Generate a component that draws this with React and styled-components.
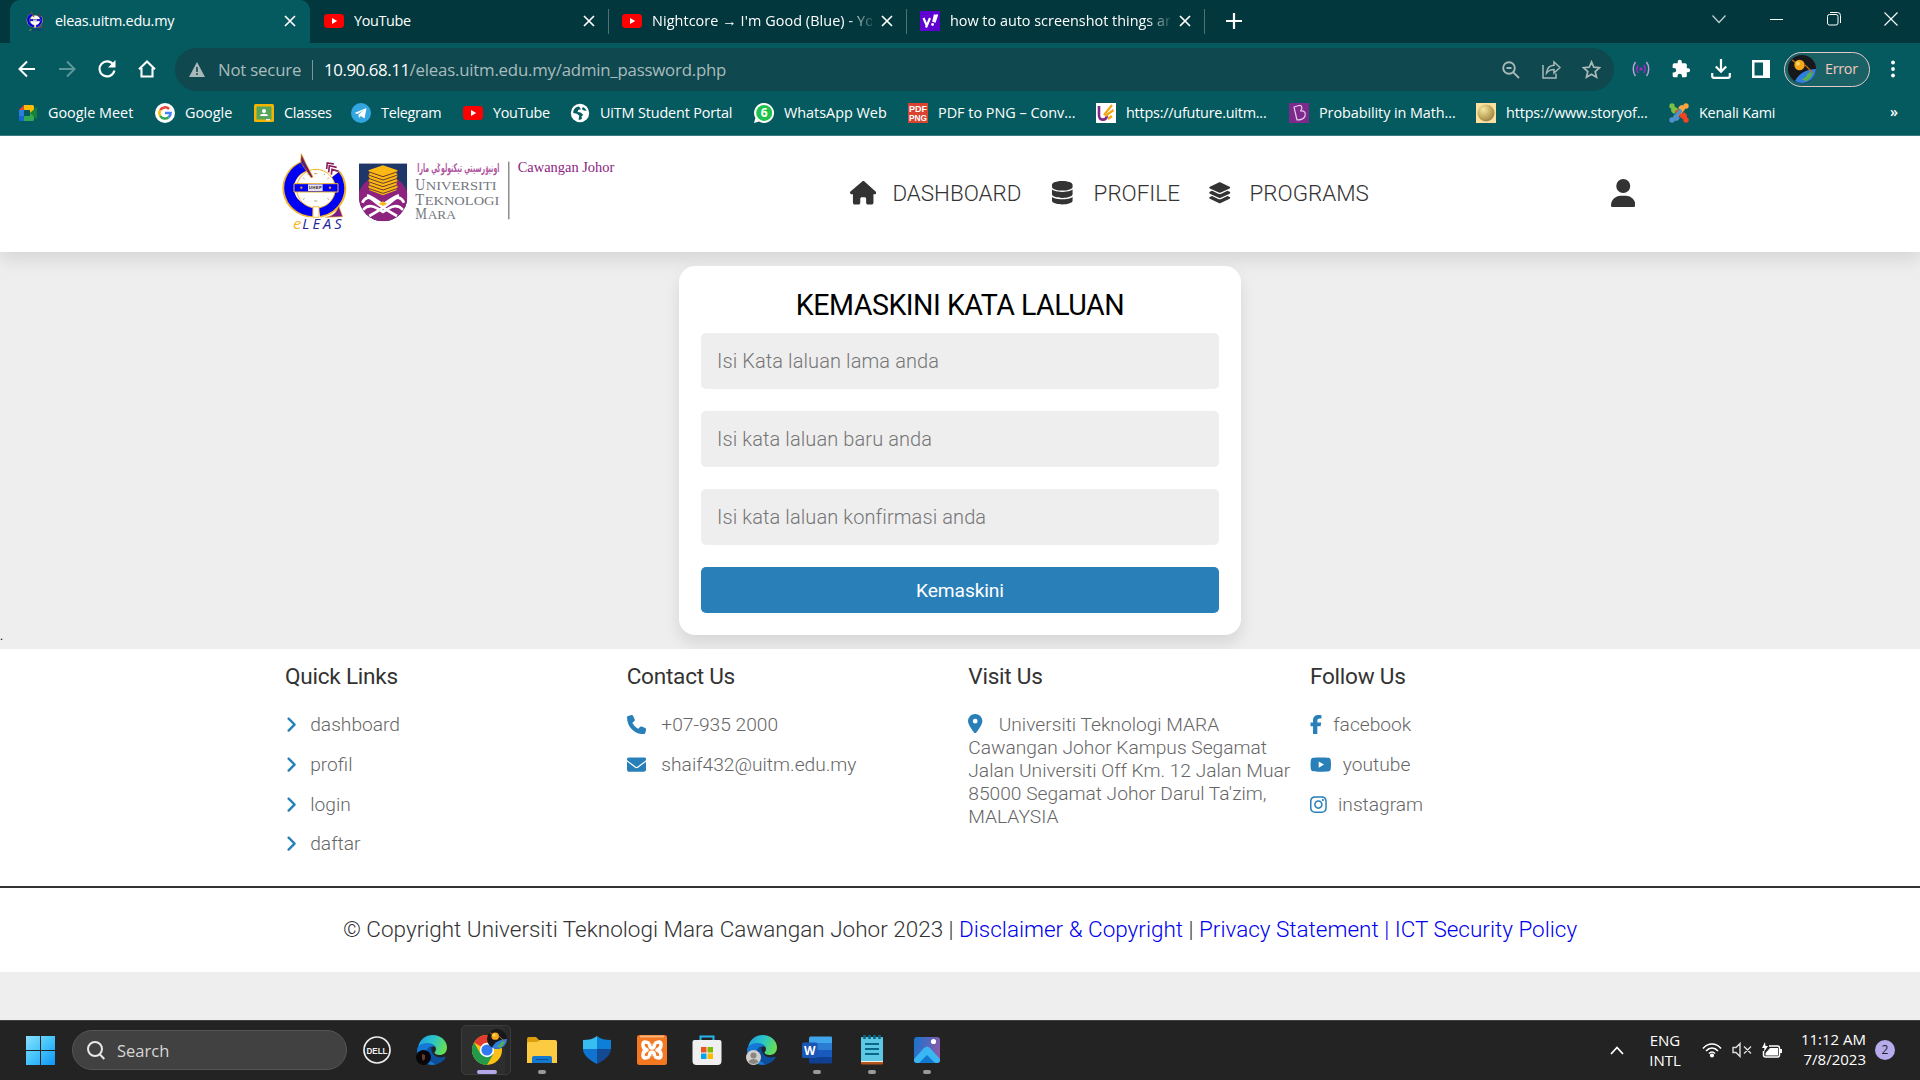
import React from "react";
import styled, { createGlobalStyle } from "styled-components";
import {
  FaHouse,
  FaDatabase,
  FaLayerGroup,
  FaUser,
  FaAngleRight,
  FaPhone,
  FaEnvelope,
  FaLocationDot,
  FaFacebookF,
  FaYoutube,
  FaInstagram,
} from "react-icons/fa6";

const ui = `"Segoe UI", "Open Sans", "Noto Sans", sans-serif`;

const Global = createGlobalStyle`
  *, *::before, *::after { box-sizing: border-box; }
  body { margin: 0; background: #eee; font-family: Roboto, sans-serif; overflow: hidden; }
  svg { display: block; flex: none; }
  a { text-decoration: none; color: inherit; }
  h2, h3, p { margin: 0; font-weight: 400; }
`;

const Screen = styled.div`
  width: 1920px;
  height: 1080px;
  display: flex;
  flex-direction: column;
  overflow: hidden;
`;

/* ---------- browser ---------- */

const TabStrip = styled.div`
  display: flex;
  height: 43px;
  padding-left: 10px;
  background: #02383d;
  font-family: ${ui};
  color: #fff;
`;

const Tab = styled.div`
  display: flex;
  align-items: center;
  width: ${(p) => p.$w}px;
  height: 43px;
  padding: 0 ${(p) => (p.$active ? 14 : 13)}px 1px ${(p) => (p.$active ? 15 : 14)}px;
  gap: 9px;
  border-radius: 10px 10px 0 0;
  background: ${(p) => (p.$active ? "#055a5f" : "transparent")};
`;

const TabTitle = styled.span`
  flex: 1;
  min-width: 0;
  margin-left: 1px;
  padding-bottom: 1px;
  white-space: nowrap;
  font-size: 14.4px;
  line-height: 20px;
  letter-spacing: ${(p) => p.$ls || 0}px;
  ${(p) =>
    p.$fade &&
    `mask-image: linear-gradient(to right, #000 89%, transparent 102%);`}
`;

const TabRule = styled.div`
  width: 1px;
  height: 25px;
  margin: 9px -1px 0 0;
  background: #4d7377;
`;

const NewTab = styled.div`
  display: flex;
  align-items: center;
  margin-left: 22px;
  padding-bottom: 1px;
`;

const WindowButtons = styled.div`
  display: flex;
  align-items: center;
  height: 37px;
  margin-left: auto;
`;

const WindowButton = styled.div`
  display: flex;
  justify-content: center;
  width: 57.3px;
`;

const Toolbar = styled.div`
  display: flex;
  align-items: center;
  height: 52px;
  padding-left: 7px;
  background: #055a5f;
  font-family: ${ui};
`;

const IconBox = styled.div`
  display: flex;
  align-items: center;
  justify-content: center;
  width: ${(p) => p.$w || 40}px;
`;

const Address = styled.div`
  display: flex;
  align-items: center;
  width: 1439px;
  height: 43px;
  margin: 1px 7px 0 8px;
  padding: 0 3px 0 14px;
  border-radius: 22px;
  background: #0f484e;
  color: #a9bcbe;
  font-size: 16.8px;
  white-space: nowrap;
`;

const Secure = styled.span`
  margin-left: 13px;
  width: 84px;
  padding-bottom: 1px;
  letter-spacing: -0.2px;
`;

const AddressRule = styled.span`
  width: 1px;
  height: 20px;
  margin: 0 11px 0 10px;
  background: #7d9799;
`;

const Url = styled.span`
  flex: 1;
  padding-bottom: 1px;
  letter-spacing: -0.2px;
`;

const Host = styled.span`
  color: #fff;
  letter-spacing: -0.4px;
`;

const Profile = styled.div`
  display: flex;
  align-items: center;
  gap: 9px;
  width: 86px;
  height: 35px;
  margin-left: 3px;
  padding-left: 3px;
  border: 1.5px solid #e3c9c8;
  border-radius: 18px;
  background: #1a6165;
  color: #f5c8c0;
  font-size: 14.4px;
  letter-spacing: -0.3px;
`;

const ProfileName = styled.span`
  padding-bottom: 1px;
`;

const Bookmarks = styled.div`
  display: flex;
  align-items: center;
  height: 41px;
  padding: 0 0 4px 18px;
  border-bottom: 1px solid #3b7d84;
  background: #055a5f;
  color: #fff;
  font-family: ${ui};
  font-size: 14.4px;
`;

const Bookmark = styled.div`
  display: flex;
  align-items: center;
  gap: 10px;
  width: ${(p) => p.$w}px;
  white-space: nowrap;
  letter-spacing: ${(p) => p.$ls || 0}px;
`;

const BookmarkLabel = styled.span`
  padding-bottom: 1px;
`;

const More = styled.span`
  margin-left: auto;
  padding: 0 22px 4px 0;
  font-weight: 600;
`;

const Close = () => (
  <svg width="12" height="12" viewBox="0 0 12 12" stroke="#fff" strokeWidth="1.7">
    <path d="M1 1l10 10M11 1L1 11" />
  </svg>
);

const YouTubeMark = () => (
  <svg width="20" height="20" viewBox="0 0 20 20">
    <rect y="3" width="20" height="14" rx="3.4" fill="#f00" />
    <path d="M8 7l5.2 3L8 13z" fill="#fff" />
  </svg>
);

const Orbit = ({ size }) => (
  <svg width={size} height={size} viewBox="0 0 28 28">
    <circle cx="14" cy="14" r="14" fill="#17181c" />
    <path d="M7 26a14 14 0 0 0 21-12c-9 0-17 4-21 12z" fill="#2f7fe0" />
    <path d="M14 25c2-3 4-2 5-5s3-2 6-3l-2 5-4 4z" fill="#58b04b" />
    <path d="M17 10l8 8M4 5l7 5" stroke="#c4701a" strokeWidth="1.2" />
    <circle cx="11.5" cy="10" r="5.2" fill="#f5a81c" />
    <circle cx="10" cy="8.5" r="2" fill="#ffd657" />
  </svg>
);

const bookmarks = [
  {
    label: "Google Meet", w: 137,
    icon: (
      <svg width="20" height="20" viewBox="0 0 20 20">
        <path d="M1 7l5-5v5z" fill="#e94335" />
        <path d="M6 2h8.500a1.500 1.500 0 0 1 1.500 1.500V9l-4 2V7H6z" fill="#fbbc04" />
        <path d="M1 7h5v6H1z" fill="#2a7de1" />
        <path d="M1 13h5v5H2.500A1.500 1.500 0 0 1 1 16.500z" fill="#1967d2" />
        <path d="M6 13h6V9.500l4 2v5a1.500 1.500 0 0 1-1.500 1.500H6z" fill="#34a853" />
        <path d="M12 10l6-5.500c.5-.4 1-.2 1 .5v10c0 .7-.5.9-1 .5z" fill="#188038" />
      </svg>
    ),
  },
  {
    label: "Google", w: 99,
    icon: (
      <svg width="20" height="20" viewBox="0 0 20 20">
        <circle cx="10" cy="10" r="10" fill="#fff" />
        <g fill="none" strokeWidth="2.5">
          <path d="M14 6A5.600 5.600 0 0 0 5.200 7.200" stroke="#ea4335" />
          <path d="M5.200 7.200a5.600 5.600 0 0 0 0 5.600" stroke="#fbbc05" />
          <path d="M5.200 12.800a5.600 5.600 0 0 0 8.400 1.500" stroke="#34a853" />
          <path d="M13.600 14.300a5.600 5.600 0 0 0 2-4.300H10" stroke="#4285f4" />
        </g>
      </svg>
    ),
  },
  {
    label: "Classes", w: 97, ls: -0.25,
    icon: (
      <svg width="20" height="20" viewBox="0 0 20 20">
        <rect y="1" width="20" height="18" rx="1.5" fill="#f4b400" />
        <rect x="2.5" y="3.5" width="15" height="13" fill="#57a55b" />
        <circle cx="10" cy="8" r="2" fill="#fff" />
        <path d="M6 13c0-3 8-3 8 0z" fill="#fff" />
        <path d="M12 16h4v1.500h-4z" fill="#eee" />
      </svg>
    ),
  },
  {
    label: "Telegram", w: 112, ls: -0.3,
    icon: (
      <svg width="20" height="20" viewBox="0 0 20 20">
        <circle cx="10" cy="10" r="10" fill="#34a6df" />
        <path d="M3.500 10L15.500 5l-2 10.500-3.600-2.600-2 2-.4-3.400 5-4.200-6.200 3.600z" fill="#fff" />
      </svg>
    ),
  },
  { label: "YouTube", w: 107, ls: -0.35, icon: <YouTubeMark /> },
  {
    label: "UiTM Student Portal", w: 184, ls: -0.15,
    icon: (
      <svg width="20" height="20" viewBox="0 0 20 20">
        <circle cx="10" cy="10" r="9.2" fill="#fff" />
        <path d="M9 3.500C5 4 3 7 3.300 10l3.500.8 2.500 2-.8 3.600c1.500.5 3 .2 3.500-.6l-.6-2.200 1.800-1.800-2.600-2.400-3.100-.3 1-2.300 2.500-.5zM13 4l-1.200 2 2 1.500 2.700.2C15.800 6 14.500 4.700 13 4z" fill="#075b60" />
      </svg>
    ),
  },
  {
    label: "WhatsApp Web", w: 154,
    icon: (
      <svg width="20" height="20" viewBox="0 0 20 20">
        <path d="M0 20l1.400-5A10 10 0 1 1 5 18.600z" fill="#fff" />
        <circle cx="10.2" cy="9.9" r="8" fill="#1fc24a" />
        <text x="10.2" y="14" textAnchor="middle" fontSize="12" fontWeight="700" fill="#fff" fontFamily="Open Sans, sans-serif">6</text>
      </svg>
    ),
  },
  {
    label: "PDF to PNG – Conv...", w: 188,
    icon: (
      <svg width="20" height="20" viewBox="0 0 20 20">
        <rect width="20" height="20" fill="#d8442f" />
        <g fill="#fff" fontSize="9" fontWeight="700" fontFamily="Liberation Sans, sans-serif">
          <text x="1" y="9" textLength="18">PDF</text>
          <text x="1" y="18" textLength="18" lengthAdjust="spacingAndGlyphs">PNG</text>
        </g>
      </svg>
    ),
  },
  {
    label: "https://ufuture.uitm...", w: 193, ls: -0.22,
    icon: (
      <svg width="20" height="20" viewBox="0 0 20 20">
        <rect width="20" height="20" fill="#fff" />
        <path d="M3 3v9c0 6 7 6 8 1" fill="none" stroke="#7c2a85" strokeWidth="2.6" />
        <path d="M8 12l8-10M9.500 13l8-6M12 16l4-3" fill="none" stroke="#f0a818" strokeWidth="2.2" />
      </svg>
    ),
  },
  {
    label: "Probability in Math...", w: 187, ls: -0.07,
    icon: (
      <svg width="20" height="20" viewBox="0 0 20 20">
        <rect width="20" height="20" fill="#7d2a8c" />
        <path d="M5 4l5-1.500c3-.5 4 3 1.500 5.500 4-.5 5.500 2 4.500 5-1 3-4 4-8 4L5 4z" fill="none" stroke="#e6cdea" strokeWidth="1.2" strokeLinejoin="round" />
      </svg>
    ),
  },
  {
    label: "https://www.storyof...", w: 193, ls: -0.15,
    icon: (
      <svg width="20" height="20" viewBox="0 0 20 20">
        <defs>
          <radialGradient id="pearl" cx=".35" cy=".3" r=".8">
            <stop offset="0" stopColor="#f5e6a5" />
            <stop offset=".6" stopColor="#bfa75a" />
            <stop offset="1" stopColor="#8b7a48" />
          </radialGradient>
        </defs>
        <rect width="20" height="20" fill="#ffdf9e" />
        <circle cx="10" cy="10" r="8.5" fill="url(#pearl)" />
      </svg>
    ),
  },
  {
    label: "Kenali Kami", w: 110, ls: -0.2,
    icon: (
      <svg width="20" height="20" viewBox="0 0 20 20" fill="none" strokeWidth="3.2" strokeLinecap="round">
        <path d="M12 11.500L7 6.500Q5 4.500 4 6t1 3" stroke="#7ac143" />
        <path d="M8.500 12l5-5q2-2 .5-3t-3 1" stroke="#f9a541" />
        <path d="M8 8.500l5 5q2 2 3 .5t-1-3" stroke="#f44321" />
        <path d="M11.500 8l-5 5q-2 2-.5 3t3-1" stroke="#5091cd" />
        <g stroke="none">
          <circle cx="3" cy="3" r="2.7" fill="#7ac143" />
          <circle cx="17" cy="3" r="2.7" fill="#f9a541" />
          <circle cx="17" cy="17" r="2.7" fill="#f44321" />
          <circle cx="3" cy="17" r="2.7" fill="#5091cd" />
        </g>
      </svg>
    ),
  },
];

/* ---------- site header ---------- */

const Header = styled.header`
  display: flex;
  align-items: center;
  height: 116px;
  flex: none;
  padding: 0 285px 2px;
  background: #fff;
  box-shadow: 0 8px 16px rgba(0, 0, 0, 0.1);
`;

const Brand = styled.div`
  display: flex;
  align-items: flex-start;
  gap: 12px;
  width: 565px;
  margin-top: -3px;
`;

const Crest = styled.div`
  margin-top: 10px;
`;

const Nav = styled.nav`
  display: flex;
  align-items: center;
  color: #333;
`;

const NavLink = styled.a`
  display: flex;
  align-items: center;
  gap: ${(p) => p.$gap}px;
  width: ${(p) => p.$w}px;
  font-size: 22.4px;
  font-weight: 300;
  line-height: 28px;
  white-space: nowrap;
  svg {
    width: ${(p) => p.$icon}px;
    height: 23.5px;
  }
`;

const Account = styled.div`
  margin-left: auto;
  color: #333;
  svg {
    width: 24.5px;
    height: 28px;
  }
`;

const ELeasLogo = ({ w, h }) => (
  <svg width={w} height={h} viewBox="45 39 183 237" overflow="visible">
    <g fill="none" strokeLinecap="butt">
      <path d="M104 82A74 70 0 0 0 128 218M148 218A74 70 0 0 0 196 106" stroke="#f0b52a" strokeWidth="35" />
      <path d="M104 82A74 70 0 0 0 128 217M148 217A74 70 0 0 0 195 108" stroke="#0000f5" strokeWidth="29" />
    </g>
    <circle cx="138" cy="149" r="58" fill="#fff" stroke="#f0b52a" strokeWidth="3" />
    <g stroke="#b9a878" strokeWidth="3">
      <path d="M132 104h10M132 186h10M104 120l-5-4M172 120l5-4M104 178l-5 4M172 178l5 4M115 108l-3-4M162 108l3-4" />
    </g>
    <path d="M72 134h132v25H72z" fill="#0000f5" stroke="#f0b52a" strokeWidth="3" />
    <path d="M114 136h44v20h-44z" fill="#e7e3ee" />
    <text x="116" y="151" fontSize="13" fontWeight="700" textLength="40" fill="#222" fontFamily="Liberation Sans, sans-serif">UHEP</text>
    <circle cx="94" cy="146" r="3.5" fill="#e3a51f" />
    <circle cx="180" cy="146" r="3.5" fill="#e3a51f" />
    <path d="M129 203h18v32h-18z" fill="#fff" stroke="#f0b52a" strokeWidth="2.5" />
    <path d="M206 200l12 33-52 2c22-4 34-14 40-35z" fill="#7b1a86" stroke="#f0b52a" strokeWidth="2" />
    <path d="M94 44l14 30 21 40-6 2-27-40c-6-10-3-16-2-32z" fill="#7b1a4e" stroke="#e3a51f" strokeWidth="2" />
    <circle cx="97" cy="79" r="8" fill="none" stroke="#1d2fd8" strokeWidth="3" />
    <g fill="none" stroke="#8d1f5c" strokeWidth="5">
      <path d="M170 90l2-18 20 3M176 100l2-20 22 5M184 107l2-16 20 6" />
    </g>
    <g fontFamily="Open Sans, sans-serif" fontStyle="italic" fontSize="44">
      <text x="69" y="271" fill="#f5b81e" textLength="25" lengthAdjust="spacingAndGlyphs">e</text>
      <text x="97" y="271" fill="#23239c" textLength="118">LEAS</text>
    </g>
  </svg>
);

const UitmLogo = () => (
  <svg width="260" height="62" viewBox="263 68 780 186" overflow="visible">
    <defs>
      <clipPath id="shield">
        <path d="M266 72h145v101a72.500 73 0 0 1-145 0z" />
      </clipPath>
    </defs>
    <g clipPath="url(#shield)">
      <path d="M266 72h145v175H266z" fill="#1f3768" />
      <circle cx="338.5" cy="184" r="77" fill="#8c247f" />
      <path d="M338 78l44 15-4 8 4 8-4 8 4 8-4 8 4 8-4 12-40 15-40-15-4-12 4-8-4-8 4-8-4-8 4-8-4-8z" fill="#fcb813" />
      <g fill="none" stroke="#6b3a34" strokeWidth="3">
        <path d="M294 97l44 15 44-15M294 107l44 15 44-15M294 117l44 15 44-15M294 127l44 15 44-15M294 137l44 15 44-15M294 147l44 15 44-15" />
      </g>
      <g fill="none" stroke="#fff" strokeWidth="8">
        <path d="M276 190c8-18 22-18 32-8 16 14 40 30 72 48" />
        <path d="M401 190c-8-18-22-18-32-8-16 14-40 30-72 48" />
        <path d="M290 168c14 4 26 14 48 28 22-14 34-24 48-28" />
        <path d="M278 212c12-14 28-14 44-4l16 10 16-10c16-10 32-10 44 4" />
      </g>
      <path d="M326 193l12-7 12 7-12 7z" fill="#fcb813" />
    </g>
    <text x="687" y="98" direction="rtl" fontSize="36" fontWeight="700" fill="#b0559f" textLength="246" lengthAdjust="spacingAndGlyphs" fontFamily="DejaVu Sans, sans-serif">اونيۏرسيتي تيکنولوݢي مارا</text>
    <g fill="#75787f" fontFamily="Liberation Serif, serif">
      <text x="435" y="153" fontSize="47" textLength="30" lengthAdjust="spacingAndGlyphs">U</text>
      <text x="466" y="153" fontSize="38" textLength="213" lengthAdjust="spacingAndGlyphs">NIVERSITI</text>
      <text x="435" y="197" fontSize="47" textLength="27" lengthAdjust="spacingAndGlyphs">T</text>
      <text x="463" y="197" fontSize="38" textLength="224" lengthAdjust="spacingAndGlyphs">EKNOLOGI</text>
      <text x="435" y="240" fontSize="47" textLength="35" lengthAdjust="spacingAndGlyphs">M</text>
      <text x="472" y="240" fontSize="38" textLength="85" lengthAdjust="spacingAndGlyphs">ARA</text>
    </g>
    <path d="M715.5 67v173" stroke="#55565c" strokeWidth="3" />
    <text x="742" y="99" fontSize="41" fill="#8c247f" textLength="290" lengthAdjust="spacingAndGlyphs" fontFamily="Liberation Serif, serif">Cawangan Johor</text>
  </svg>
);

/* ---------- form ---------- */

const Main = styled.main`
  display: flex;
  justify-content: center;
  align-items: flex-start;
  height: 397px;
  flex: none;
  padding-top: 14px;
`;

const Dot = styled.span`
  align-self: flex-end;
  width: 0;
  padding-bottom: 4px;
  font-size: 12px;
  line-height: 18px;
`;

const Card = styled.form`
  display: flex;
  flex-direction: column;
  width: 562px;
  height: 369px;
  margin: 0 auto;
  padding: 22px;
  border-radius: 16px;
  background: #fff;
  box-shadow: 0 8px 16px rgba(0, 0, 0, 0.1);
`;

const CardTitle = styled.h2`
  height: 45px;
  color: #000;
  font-size: 28.6px;
  letter-spacing: -0.5px;
  line-height: 35px;
  text-align: center;
`;

const Field = styled.input`
  height: 56px;
  margin-bottom: 22px;
  padding: 0 16px;
  border: 0;
  border-radius: 5px;
  background: #eee;
  font: 300 20px Roboto, sans-serif;
  letter-spacing: 0.1px;
  &::placeholder { color: #757575; opacity: 1; }
`;

const Submit = styled.button`
  height: 46px;
  border: 0;
  border-radius: 5px;
  background: #2980b9;
  color: #fff;
  font: 400 19.2px Roboto, sans-serif;
  letter-spacing: -0.1px;
`;

/* ---------- footer ---------- */

const Footer = styled.footer`
  flex: none;
  height: 323px;
  background: #fff;
`;

const Columns = styled.div`
  display: grid;
  grid-template-columns: repeat(4, 1fr);
  gap: 16.6px;
  height: 237px;
  padding: 0 285px;
`;

const Column = styled.section`
  padding-top: 14px;
`;

const ColumnTitle = styled.h3`
  height: 50px;
  color: #333;
  font-size: 22.6px;
  letter-spacing: -0.25px;
  line-height: 28px;
`;

const FooterLink = styled.a`
  display: flex;
  align-items: center;
  gap: ${(p) => p.$gap}px;
  height: 23px;
  margin-bottom: 16.8px;
  color: #666;
  font-size: 19.2px;
  font-weight: 300;
  white-space: nowrap;
  svg {
    width: ${(p) => p.$icon}px;
    height: 19.2px;
    color: #2980b9;
  }
`;

const Visit = styled.p`
  color: #666;
  font-size: 19.2px;
  font-weight: 300;
  line-height: 23px;
  svg {
    display: inline-block;
    width: 14.4px;
    height: 19.2px;
    margin-right: 16px;
    color: #2980b9;
    vertical-align: -2px;
  }
`;

const Copyright = styled.div`
  padding-top: 26px;
  border-top: 2px solid #333;
  color: #333;
  font-size: 22.5px;
  font-weight: 300;
  line-height: 30px;
  text-align: center;
  a { color: #00e; }
`;

/* ---------- taskbar ---------- */

const Taskbar = styled.div`
  display: flex;
  align-items: center;
  height: 60px;
  margin-top: auto;
  padding: 0 25px 1px 26px;
  border-top: 1px solid #3c4040;
  background: #232323;
  color: #fff;
  font-family: ${ui};
`;

const Search = styled.div`
  display: flex;
  align-items: center;
  gap: 12px;
  width: 275px;
  height: 40px;
  margin: 0 2px 0 17px;
  padding: 0 0 0 14px;
  border: 1px solid #555;
  border-radius: 20px;
  background: #414141;
  color: #d6d6d6;
  font-size: 16.5px;
`;

const AppSlot = styled.div`
  display: flex;
  align-items: center;
  justify-content: center;
  width: 55px;
  height: 58px;
  position: relative;
`;

const Art = styled.div`
  position: relative;
`;

const Running = styled.span`
  position: absolute;
  bottom: 5px;
  left: 50%;
  width: ${(p) => (p.$on ? 20 : 8)}px;
  height: 4px;
  margin-left: ${(p) => (p.$on ? -10 : -4)}px;
  border-radius: 2px;
  background: ${(p) => (p.$on ? "#b5a8e8" : "#9a9a9a")};
`;

const ActivePlate = styled.span`
  position: absolute;
  top: 4px;
  left: 2px;
  width: 50px;
  height: 50px;
  border: 1px solid #3c3c3c;
  border-radius: 5px;
  background: #2e2e2e;
  box-shadow: inset -5px 0 0 #292929;
`;

const Over = styled.span`
  position: absolute;
  left: ${(p) => p.$x}px;
  top: ${(p) => p.$y}px;
`;

const Tray = styled.div`
  display: flex;
  align-items: center;
  margin-left: auto;
  font-size: 15px;
  line-height: 20px;
`;

const Language = styled.div`
  width: 40px;
  margin: 0 17px 0 21px;
  padding-bottom: 1px;
  text-align: center;
`;

const Clock = styled.div`
  width: 84px;
  margin-right: 9px;
  padding-bottom: 3px;
  text-align: right;
  white-space: nowrap;
`;

const Badge = styled.div`
  width: 20px;
  height: 20px;
  border-radius: 50%;
  background: #b6abec;
  color: #222;
  font-size: 12px;
  text-align: center;
`;

const EdgeIcon = ({ id }) => (
  <svg width="30" height="30" viewBox="0 0 30 30">
    <defs>
      <linearGradient id={id} x1="0" x2="1" y1=".3" y2=".6">
        <stop offset="0" stopColor="#1fa2e6" />
        <stop offset=".5" stopColor="#2cc6c4" />
        <stop offset="1" stopColor="#6be04b" />
      </linearGradient>
    </defs>
    <path d="M1 12C3 4 9 0 15.500 0 24 0 30 6 30 12.500c0 5-3.500 7.500-7.500 7.500-3 0-5-1-5-2.200 0-1 1.500-1.500 1.500-3.800 0-3-3-5-7-5-5 0-9 1-11 3z" fill={`url(#${id})`} />
    <path d="M0 15c0-4 5-7 10-7 4 0 7 1.500 8.500 4-7-2-10 4-8 9 1.500 4 5 7 9 8.200C10 32 0 26 0 15z" fill="#1478d4" />
    <path d="M10.500 21c-2-5 0-8.500 4-9-1 5 3 11 10 10.500 2-.2 3.500-1 4-.5.5 1-3.500 6-9 7.200-4-1.200-7.500-4-9-8.200z" fill="#0d4f9e" />
  </svg>
);

const apps = [
  {
    key: "dell",
    art: (
      <svg width="28" height="28" viewBox="0 0 28 28">
        <circle cx="14" cy="14" r="13" fill="none" stroke="#eee" strokeWidth="1.7" />
        <text x="3.5" y="17.6" fontSize="9.5" fontWeight="700" fill="#eee" textLength="21" lengthAdjust="spacingAndGlyphs" fontFamily="Liberation Sans, sans-serif">DELL</text>
      </svg>
    ),
  },
  {
    key: "edge",
    art: <EdgeIcon id="edgeA" />,
    over: (
      <Over $x={12} $y={29}>
        <svg width="15" height="15" viewBox="0 0 15 15">
          <circle cx="7.5" cy="7.5" r="7.5" fill="#080606" />
          <path d="M6 4l3 1v4l-2 2-1-3z" fill="#6b3a2c" />
        </svg>
      </Over>
    ),
  },
  {
    key: "chrome",
    active: true,
    art: (
      <svg width="30" height="30" viewBox="0 0 30 30">
        <circle cx="15" cy="15" r="15" fill="#fbc116" />
        <path d="M15 15L2 7.500A15 15 0 0 1 28 7.500H15z" fill="#e33b2e" />
        <path d="M2 7.500A15 15 0 0 0 15 30l6.500-11.300L15 22 8.500 18.700z" fill="#249a4b" />
        <circle cx="15" cy="15" r="7.2" fill="#fff" />
        <circle cx="15" cy="15" r="5.6" fill="#3079ee" />
      </svg>
    ),
    over: (
      <Over $x={28} $y={8}>
        <Orbit size={20} />
      </Over>
    ),
  },
  {
    key: "files",
    run: true,
    art: (
      <svg width="30" height="28" viewBox="0 0 30 28">
        <path d="M0 3a2 2 0 0 1 2-2h7l4 4v5H0z" fill="#dc9d0c" />
        <path d="M0 8q0-2 2-2l8 0 3-2h15a2 2 0 0 1 2 2v21H0z" fill="#fdcb42" />
        <path d="M5 27v-5q0-2 2-2h16q2 0 2 2v5z" fill="#1378cf" />
        <path d="M9 23.500h12" stroke="#0b4f93" />
      </svg>
    ),
  },
  {
    key: "defender",
    art: (
      <svg width="28" height="30" viewBox="0 0 28 30">
        <path d="M14 1c4 3 8 4 14 4v9H14z" fill="#0d7fd6" />
        <path d="M14 1C10 4 6 5 0 5v9h14z" fill="#38bdf1" />
        <path d="M0 14h14v15C6 25 0 20 0 14z" fill="#0e74cf" />
        <path d="M28 14H14v15c8-4 14-9 14-15z" fill="#134a93" />
      </svg>
    ),
  },
  {
    key: "xampp",
    art: (
      <svg width="30" height="30" viewBox="0 0 30 30">
        <rect width="30" height="30" rx="2.5" fill="#f47722" />
        <path d="M3 1.500h24" stroke="#f9b27a" strokeWidth="2" />
        <path d="M12.500 8.500Q6 5 6 10q0 4 4 5-4 1-4 5 0 5 6.500 1.500M17.500 8.500Q24 5 24 10q0 4-4 5 4 1 4 5 0 5-6.500 1.500M12.500 8.500q0 4.500 2.500 4.500t2.500-4.500M12.500 21.500q0-4.500 2.500-4.500t2.500 4.500" fill="none" stroke="#fff" strokeWidth="3.6" strokeLinejoin="round" />
      </svg>
    ),
  },
  {
    key: "store",
    art: (
      <svg width="30" height="30" viewBox="0 0 30 30">
        <path d="M8.500 6V1.500h13V6" fill="none" stroke="#27b5ee" strokeWidth="2" />
        <path d="M.5 7q0-2 2-2h25q2 0 2 2v19q0 4-4 4h-21q-4 0-4-4z" fill="#f0f0f0" />
        <path d="M9 12h5.500v5.500H9z" fill="#f25022" />
        <path d="M15.500 12H21v5.500h-5.500z" fill="#7fba00" />
        <path d="M9 18.500h5.500V24H9z" fill="#00a4ef" />
        <path d="M15.500 18.500H21V24h-5.500z" fill="#ffb900" />
      </svg>
    ),
  },
  {
    key: "edge-profile",
    art: <EdgeIcon id="edgeB" />,
    over: (
      <Over $x={12} $y={29}>
        <svg width="15" height="15" viewBox="0 0 15 15">
          <circle cx="7.5" cy="7.5" r="7.5" fill="#d0cecb" />
          <circle cx="7.5" cy="5.5" r="3" fill="#8a8783" />
          <path d="M2.500 12c1-4 9-4 10 0a7 7 0 0 1-10 0z" fill="#8a8783" />
        </svg>
      </Over>
    ),
  },
  {
    key: "word",
    run: true,
    art: (
      <svg width="30" height="28" viewBox="0 0 30 28">
        <path d="M7 2q0-1.500 1.500-1.500H29q1 0 1 1V7H7z" fill="#41a5ee" />
        <path d="M7 7h23v7H7z" fill="#2b7cd3" />
        <path d="M7 14h23v7H7z" fill="#185abd" />
        <path d="M7 21h23v5q0 1.500-1.500 1.500H8.500Q7 27.500 7 26z" fill="#103f91" />
        <rect y="6.5" width="15.5" height="15.5" rx="1.5" fill="#1a56b5" />
        <text x="2" y="18.5" fontSize="12" fontWeight="700" fill="#fff" textLength="11.5" lengthAdjust="spacingAndGlyphs" fontFamily="Open Sans, sans-serif">W</text>
      </svg>
    ),
  },
  {
    key: "notepad",
    run: true,
    art: (
      <svg width="22" height="30" viewBox="0 0 22 30">
        <path d="M0 26h22v2.500q0 1-1 1H1q-1 0-1-1z" fill="#b5561c" />
        <path d="M0 25h22v2H0z" fill="#f2f2f2" />
        <path d="M0 3q0-1 1-1h20q1 0 1 1v23H0z" fill="#5cc8e4" />
        <path d="M4 9h14M4 14h14M4 19h14" stroke="#0a6685" strokeWidth="2" />
        <path d="M3.500 0v4M8.500 0v4M13.500 0v4M18.500 0v4" stroke="#0a6685" strokeWidth="2.6" />
      </svg>
    ),
  },
  {
    key: "photos",
    run: true,
    art: (
      <svg width="26" height="26" viewBox="0 0 26 26">
        <defs>
          <linearGradient id="photo" x1="0" x2="1" y1=".4" y2=".6">
            <stop offset="0" stopColor="#1d72d0" />
            <stop offset="1" stopColor="#8c5aa8" />
          </linearGradient>
          <clipPath id="photoClip"><rect width="26" height="26" rx="3" /></clipPath>
        </defs>
        <g clipPath="url(#photoClip)">
          <rect width="26" height="26" fill="url(#photo)" />
          <path d="M0 22l10-11q3-3 6 0l10 11v4H0z" fill="#38b7f2" />
          <path d="M5 26l8-8 8 8z" fill="#1177cf" />
          <circle cx="19.5" cy="4.5" r="2.6" fill="#fff" />
        </g>
      </svg>
    ),
  },
];

export default function App() {
  return (
    <Screen>
      <Global />
      <TabStrip>
        <Tab $w={300} $active>
          <ELeasLogo w={20} h={20} />
          <TabTitle $ls={-0.23}>eleas.uitm.edu.my</TabTitle>
          <Close />
        </Tab>
        <Tab $w={298}>
          <YouTubeMark />
          <TabTitle $ls={-0.35}>YouTube</TabTitle>
          <Close />
        </Tab>
        <TabRule />
        <Tab $w={298}>
          <YouTubeMark />
          <TabTitle $fade $ls={0.08}>Nightcore → I'm Good (Blue) - Yo</TabTitle>
          <Close />
        </Tab>
        <TabRule />
        <Tab $w={298}>
          <svg width="20" height="20" viewBox="0 0 20 20">
            <rect width="20" height="20" fill="#6001d2" />
            <path d="M3.500 7l3 7M10 7l-4 9.500M15 3.500L13.200 11M17.200 3.500l-2.700 8" stroke="#fff" strokeWidth="2.2" fill="none" />
            <circle cx="12.6" cy="13.5" r="1.4" fill="#fff" />
          </svg>
          <TabTitle $fade>how to auto screenshot things an</TabTitle>
          <Close />
        </Tab>
        <TabRule />
        <NewTab>
          <svg width="16" height="16" viewBox="0 0 16 16" stroke="#fff" strokeWidth="2.2">
            <path d="M8 0v16M0 8h16" />
          </svg>
        </NewTab>
        <WindowButtons>
          <WindowButton>
            <svg width="14" height="14" viewBox="0 0 14 14" fill="none" stroke="#c7d3d4" strokeWidth="1.2"><path d="M.5 3.500L7 10.500l6.500-7" /></svg>
          </WindowButton>
          <WindowButton>
            <svg width="13" height="14" viewBox="0 0 13 14" stroke="#fff"><path d="M0 7.500h13" /></svg>
          </WindowButton>
          <WindowButton>
            <svg width="14" height="14" viewBox="0 0 14 14" fill="none" stroke="#fff"><rect x=".5" y="2.5" width="10.5" height="10.5" rx="2" /><path d="M3 .5h7.500a3 3 0 0 1 3 3V11" /></svg>
          </WindowButton>
          <WindowButton>
            <svg width="14" height="14" viewBox="0 0 14 14" stroke="#fff" strokeWidth="1.1"><path d="M.5.5l13 13M13.500.5l-13 13" /></svg>
          </WindowButton>
        </WindowButtons>
      </TabStrip>

      <Toolbar>
        <IconBox>
          <svg width="18" height="18" viewBox="0 0 18 18" fill="none" stroke="#fff" strokeWidth="2"><path d="M17 9H2M9 1.500L1.500 9 9 16.500" /></svg>
        </IconBox>
        <IconBox>
          <svg width="18" height="18" viewBox="0 0 18 18" fill="none" stroke="#5f9699" strokeWidth="2"><path d="M1 9h15M9 1.500L16.500 9 9 16.500" /></svg>
        </IconBox>
        <IconBox>
          <svg width="18" height="18" viewBox="0 0 18 18" fill="none" stroke="#fff" strokeWidth="2.1"><path d="M15.500 5A7.500 7.500 0 1 0 16.400 10.500" /><path d="M17.500 0v7.500H10z" fill="#fff" stroke="none" /></svg>
        </IconBox>
        <IconBox>
          <svg width="18" height="18" viewBox="0 0 18 18" fill="none" stroke="#fff" strokeWidth="2.1"><path d="M1 9.200L9 1.500l8 7.700M3.500 8v8.500h11V8" /></svg>
        </IconBox>
        <Address>
          <svg width="16" height="15" viewBox="0 0 16 15"><path d="M8 0l8 15H0z" fill="#a9b9ba" /><path d="M8 5v5M8 11.300V13" stroke="#0f484e" strokeWidth="1.6" /></svg>
          <Secure>Not secure</Secure>
          <AddressRule />
          <Url><Host>10.90.68.11</Host>/eleas.uitm.edu.my/admin_password.php</Url>
          <IconBox>
            <svg width="18" height="18" viewBox="0 0 18 18" fill="none" stroke="#a9b9ba" strokeWidth="1.9"><circle cx="7" cy="7" r="5.8" /><path d="M4.500 7h5M11.300 11.300L17 17" /></svg>
          </IconBox>
          <IconBox>
            <svg width="19" height="19" viewBox="0 0 19 19" fill="none" stroke="#a9b9ba" strokeWidth="1.5"><path d="M1 5v13h13v-4.500" /><path d="M4.500 13c.5-5 3-7.500 7.500-7.800V2l6 5.500-6 5.500V9.500c-3.500 0-5.500 1-7.500 3.500z" /></svg>
          </IconBox>
          <IconBox>
            <svg width="19" height="19" viewBox="0 0 20 20" fill="none" stroke="#a9b9ba" strokeWidth="1.8"><path d="M10 2l2.400 5.600 6.100.5-4.600 4 1.400 6L10 14.900 4.700 18.100l1.400-6-4.600-4 6.100-.5z" /></svg>
          </IconBox>
        </Address>
        <IconBox>
          <svg width="18" height="16" viewBox="0 0 18 16" fill="none" strokeWidth="1.5"><path d="M3.500 1c-3 4-3 10 0 14M14.500 1c3 4 3 10 0 14" stroke="#b9a3d6" /><path d="M6.200 4c-1.600 2.500-1.600 5.500 0 8M11.800 4c1.600 2.500 1.600 5.500 0 8" stroke="#a02bc0" /><circle cx="9" cy="8" r="1.7" fill="#a02bc0" /></svg>
        </IconBox>
        <IconBox>
          <svg width="20" height="20" viewBox="0 0 24 24" fill="#fff"><path d="M20.500 11H19V7a2 2 0 0 0-2-2h-4V3.500a2.500 2.500 0 0 0-5 0V5H4a2 2 0 0 0-2 2v3.800h1.500a2.700 2.700 0 0 1 0 5.400H2V20a2 2 0 0 0 2 2h3.800v-1.500a2.700 2.700 0 0 1 5.400 0V22H17a2 2 0 0 0 2-2v-4h1.500a2.500 2.500 0 0 0 0-5z" /></svg>
        </IconBox>
        <IconBox>
          <svg width="20" height="20" viewBox="0 0 20 20" fill="none" stroke="#fff" strokeWidth="2.2"><path d="M10 0v12M4.800 7.500L10 12.700l5.200-5.200M1.200 14v3q0 1.800 1.800 1.800h14q1.800 0 1.800-1.800v-3" /></svg>
        </IconBox>
        <IconBox>
          <svg width="18" height="18" viewBox="0 0 18 18"><path d="M0 0h18v18H0zM2.500 2.500v13h8.500v-13z" fill="#fff" fillRule="evenodd" /></svg>
        </IconBox>
        <Profile>
          <Orbit size={28} />
          <ProfileName>Error</ProfileName>
        </Profile>
        <IconBox $w={45}>
          <svg width="4" height="18" viewBox="0 0 4 18" fill="#fff"><circle cx="2" cy="2.5" r="1.9" /><circle cx="2" cy="9" r="1.9" /><circle cx="2" cy="15.5" r="1.9" /></svg>
        </IconBox>
      </Toolbar>

      <Bookmarks>
        {bookmarks.map((b) => (
          <Bookmark key={b.label} $w={b.w} $ls={b.ls}>
            {b.icon}
            <BookmarkLabel>{b.label}</BookmarkLabel>
          </Bookmark>
        ))}
        <More>»</More>
      </Bookmarks>

      <Header>
        <Brand>
          <ELeasLogo w={61} h={79} />
          <Crest><UitmLogo /></Crest>
        </Brand>
        <Nav>
          <NavLink $icon={26.4} $gap={16} $w={202}><FaHouse />DASHBOARD</NavLink>
          <NavLink $icon={20.6} $gap={21} $w={156}><FaDatabase />PROFILE</NavLink>
          <NavLink $icon={23.5} $gap={18} $w={170}><FaLayerGroup />PROGRAMS</NavLink>
        </Nav>
        <Account><FaUser /></Account>
      </Header>

      <Main>
        <Dot>.</Dot>
        <Card>
          <CardTitle>KEMASKINI KATA LALUAN</CardTitle>
          <Field placeholder="Isi Kata laluan lama anda" />
          <Field placeholder="Isi kata laluan baru anda" />
          <Field placeholder="Isi kata laluan konfirmasi anda" />
          <Submit type="button">Kemaskini</Submit>
        </Card>
      </Main>

      <Footer>
        <Columns>
          <Column>
            <ColumnTitle>Quick Links</ColumnTitle>
            {["dashboard", "profil", "login", "daftar"].map((t) => (
              <FooterLink key={t} $icon={12} $gap={13.2}><FaAngleRight />{t}</FooterLink>
            ))}
          </Column>
          <Column>
            <ColumnTitle>Contact Us</ColumnTitle>
            <FooterLink $icon={19.2} $gap={15.5}><FaPhone />+07-935 2000</FooterLink>
            <FooterLink $icon={19.2} $gap={15.5}><FaEnvelope />shaif432@uitm.edu.my</FooterLink>
          </Column>
          <Column>
            <ColumnTitle>Visit Us</ColumnTitle>
            <Visit><FaLocationDot />Universiti Teknologi MARA Cawangan Johor Kampus Segamat Jalan Universiti Off Km. 12 Jalan Muar 85000 Segamat Johor Darul Ta'zim, MALAYSIA</Visit>
          </Column>
          <Column>
            <ColumnTitle>Follow Us</ColumnTitle>
            <FooterLink $icon={12} $gap={11.3}><FaFacebookF />facebook</FooterLink>
            <FooterLink $icon={21.6} $gap={11.3}><FaYoutube />youtube</FooterLink>
            <FooterLink $icon={16.8} $gap={11.3}><FaInstagram />instagram</FooterLink>
          </Column>
        </Columns>
        <Copyright>
          © Copyright Universiti Teknologi Mara Cawangan Johor 2023 | <a>Disclaimer &amp; Copyright</a> | <a>Privacy Statement | ICT Security Policy</a>
        </Copyright>
      </Footer>

      <Taskbar>
        <svg width="29" height="29" viewBox="0 0 29 29">
          <defs>
            <linearGradient id="win" x1="0" x2="1" y1="0" y2="1">
              <stop offset="0" stopColor="#8ae0fd" />
              <stop offset=".5" stopColor="#44c4fb" />
              <stop offset="1" stopColor="#0f94f5" />
            </linearGradient>
          </defs>
          <path d="M0 0h14v14H0zM15 0h14v14H15zM0 15h14v14H0zM15 15h14v14H15z" fill="url(#win)" />
        </svg>
        <Search>
          <svg width="18" height="19" viewBox="0 0 18 19" fill="none" stroke="#e8e8e8" strokeWidth="2"><circle cx="8" cy="8" r="7" /><path d="M12.700 13.200L17.300 18" /></svg>
          Search
        </Search>
        {apps.map((a) => (
          <AppSlot key={a.key}>
            {a.active && <ActivePlate />}
            <Art>{a.art}</Art>
            {a.over}
            {(a.run || a.active) && <Running $on={a.active} />}
          </AppSlot>
        ))}
        <Tray>
          <svg width="14" height="9" viewBox="0 0 14 9" fill="none" stroke="#fff" strokeWidth="1.8"><path d="M1 8l6-6.500L13 8" /></svg>
          <Language>ENG<br />INTL</Language>
          <svg width="20" height="16" viewBox="0 0 20 16" fill="none" stroke="#fff" strokeWidth="1.6"><path d="M1 6.500c5-6 13-6 18 0M4 9c3.500-4 8.500-4 12 0M7 11.500c2-2 4-2 6 0" /><circle cx="10" cy="13.5" r="1.3" fill="#fff" /></svg>
          <svg width="40" height="16" viewBox="0 0 40 16" fill="none" stroke="#ddd" strokeWidth="1.4"><path d="M11 5.500h3l4-4v13l-4-4h-3zM22 4.500l7 7M29 4.500l-7 7" /></svg>
          <svg width="20" height="17" viewBox="0 0 20 17"><path d="M7 4h8.500a2 2 0 0 1 2 2v7a2 2 0 0 1-2 2h-12a2 2 0 0 1-2-2V9" fill="none" stroke="#fff" strokeWidth="1.5" /><path d="M8 6h8v7.500H3.500V11zM18 7h2v4h-2zM3 0L0 6h2.500L2 10l4-6H3.500z" fill="#fff" /></svg>
          <Clock>11:12 AM<br />7/8/2023</Clock>
          <Badge>2</Badge>
        </Tray>
      </Taskbar>
    </Screen>
  );
}
